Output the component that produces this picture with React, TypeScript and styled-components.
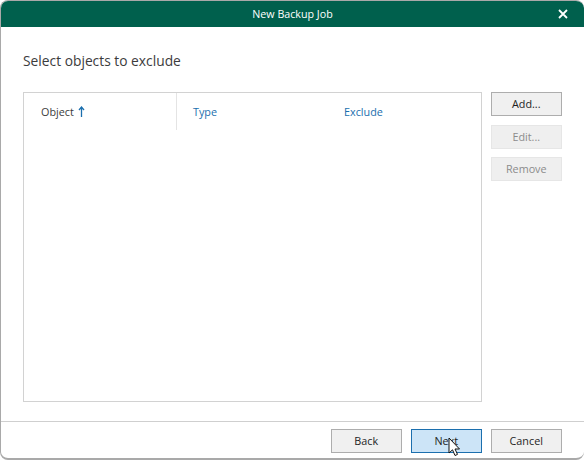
import React from "react";
import styled, { createGlobalStyle } from "styled-components";

const GlobalStyle = createGlobalStyle`
  html, body {
    margin: 0;
    padding: 0;
    background: #ffffff;
  }
  body {
    font-family: "Open Sans", "Noto Sans", "Liberation Sans", sans-serif;
  }
`;

const Dialog = styled.div`
  position: relative;
  width: 584px;
  height: 460px;
  box-sizing: border-box;
  display: flex;
  flex-direction: column;
  overflow: hidden;
  background: #ffffff;
  border-left: 1px solid #a9a9a9;
  border-bottom: 2px solid #a9a9a9;
  border-top: 1px solid #a9a9a9;
  border-radius: 8px 8px 8px 8px;
`;

const TitleBar = styled.div`
  position: relative;
  flex: none;
  height: 26px;
  display: flex;
  align-items: center;
  justify-content: center;
  background: #00604d;
  color: #ffffff;
  font-size: 10.7px;
`;

const CloseButton = styled.svg`
  position: absolute;
  right: 16px;
  top: 8px;
  width: 10px;
  height: 10px;
`;

const Body = styled.div`
  flex: 1;
  display: flex;
  flex-direction: column;
  padding: 24px 22px 19px 22px;
  min-height: 0;
`;

const Heading = styled.h1`
  margin: 0 0 21px;
  font-size: 13.8px;
  line-height: 20px;
  font-weight: 400;
  color: #3c3c3c;
`;

const Content = styled.div`
  flex: 1;
  display: flex;
  gap: 9px;
  min-height: 0;
`;

const ObjectTable = styled.div`
  width: 459px;
  box-sizing: border-box;
  border: 1px solid #d2d2d2;
  display: grid;
  grid-template-columns: 153px 151px 1fr;
  grid-template-rows: 37px;
`;

const HeaderCell = styled.div<{ $active?: boolean; $divided?: boolean }>`
  display: flex;
  align-items: center;
  gap: 4px;
  padding-left: ${({ $active }) => ($active ? "17px" : "16px")};
  font-size: 10.8px;
  color: ${({ $active }) => ($active ? "#3c3c3c" : "#1b6fae")};
  border-right: ${({ $divided }) => ($divided ? "1px solid #e4e4e4" : "none")};
`;

const Actions = styled.div`
  display: flex;
  flex-direction: column;
  gap: 8.5px;
`;

const Button = styled.button<{ $primary?: boolean }>`
  width: 70.5px;
  height: 24px;
  box-sizing: border-box;
  padding: 0 0 1px;
  font-family: inherit;
  font-size: 10.8px;
  color: #1e1e1e;
  background: ${({ $primary }) => ($primary ? "#cce4f7" : "#f0f0f0")};
  border: 1px solid ${({ $primary }) => ($primary ? "#1b6fae" : "#adadad")};

  &:disabled {
    color: #8c8c8c;
    background: #efefef;
    border-color: #e6e6e6;
  }
`;

const Footer = styled.div`
  flex: none;
  height: 37px;
  display: flex;
  justify-content: flex-end;
  gap: 9.5px;
  padding: 7px 22.5px 0 0;
  box-sizing: border-box;
  border-top: 1px solid #cfcfcf;
`;

const Pointer = styled.svg`
  position: absolute;
  left: 448px;
  top: 437px;
  width: 14px;
  height: 20px;
`;

export default function App() {
  return (
    <>
      <GlobalStyle />
      <Dialog>
        <TitleBar>
          New Backup Job
          <CloseButton viewBox="0 0 10 10">
            <path d="M1 1 L9 9 M9 1 L1 9" stroke="#ffffff" strokeWidth="1.8" fill="none" />
          </CloseButton>
        </TitleBar>
        <Body>
          <Heading>Select objects to exclude</Heading>
          <Content>
            <ObjectTable>
              <HeaderCell $active $divided>
                Object
                <svg width="7" height="12" viewBox="0 0 7 12">
                  <path d="M3.5 1 V11 M1 4 L3.5 1 L6 4" stroke="#1b6fae" strokeWidth="1.3" fill="none" />
                </svg>
              </HeaderCell>
              <HeaderCell>Type</HeaderCell>
              <HeaderCell>Exclude</HeaderCell>
            </ObjectTable>
            <Actions>
              <Button>Add...</Button>
              <Button disabled>Edit...</Button>
              <Button disabled>Remove</Button>
            </Actions>
          </Content>
        </Body>
        <Footer>
          <Button>Back</Button>
          <Button $primary>Next</Button>
          <Button>Cancel</Button>
        </Footer>
      </Dialog>
      <Pointer viewBox="0 0 14 20">
        <path d="M1 1 V16 L4.5 12.8 L7 18.5 L9.5 17.4 L7 12 L11.5 12 Z" fill="#ffffff" stroke="#111111" strokeWidth="1" />
      </Pointer>
    </>
  );
}
